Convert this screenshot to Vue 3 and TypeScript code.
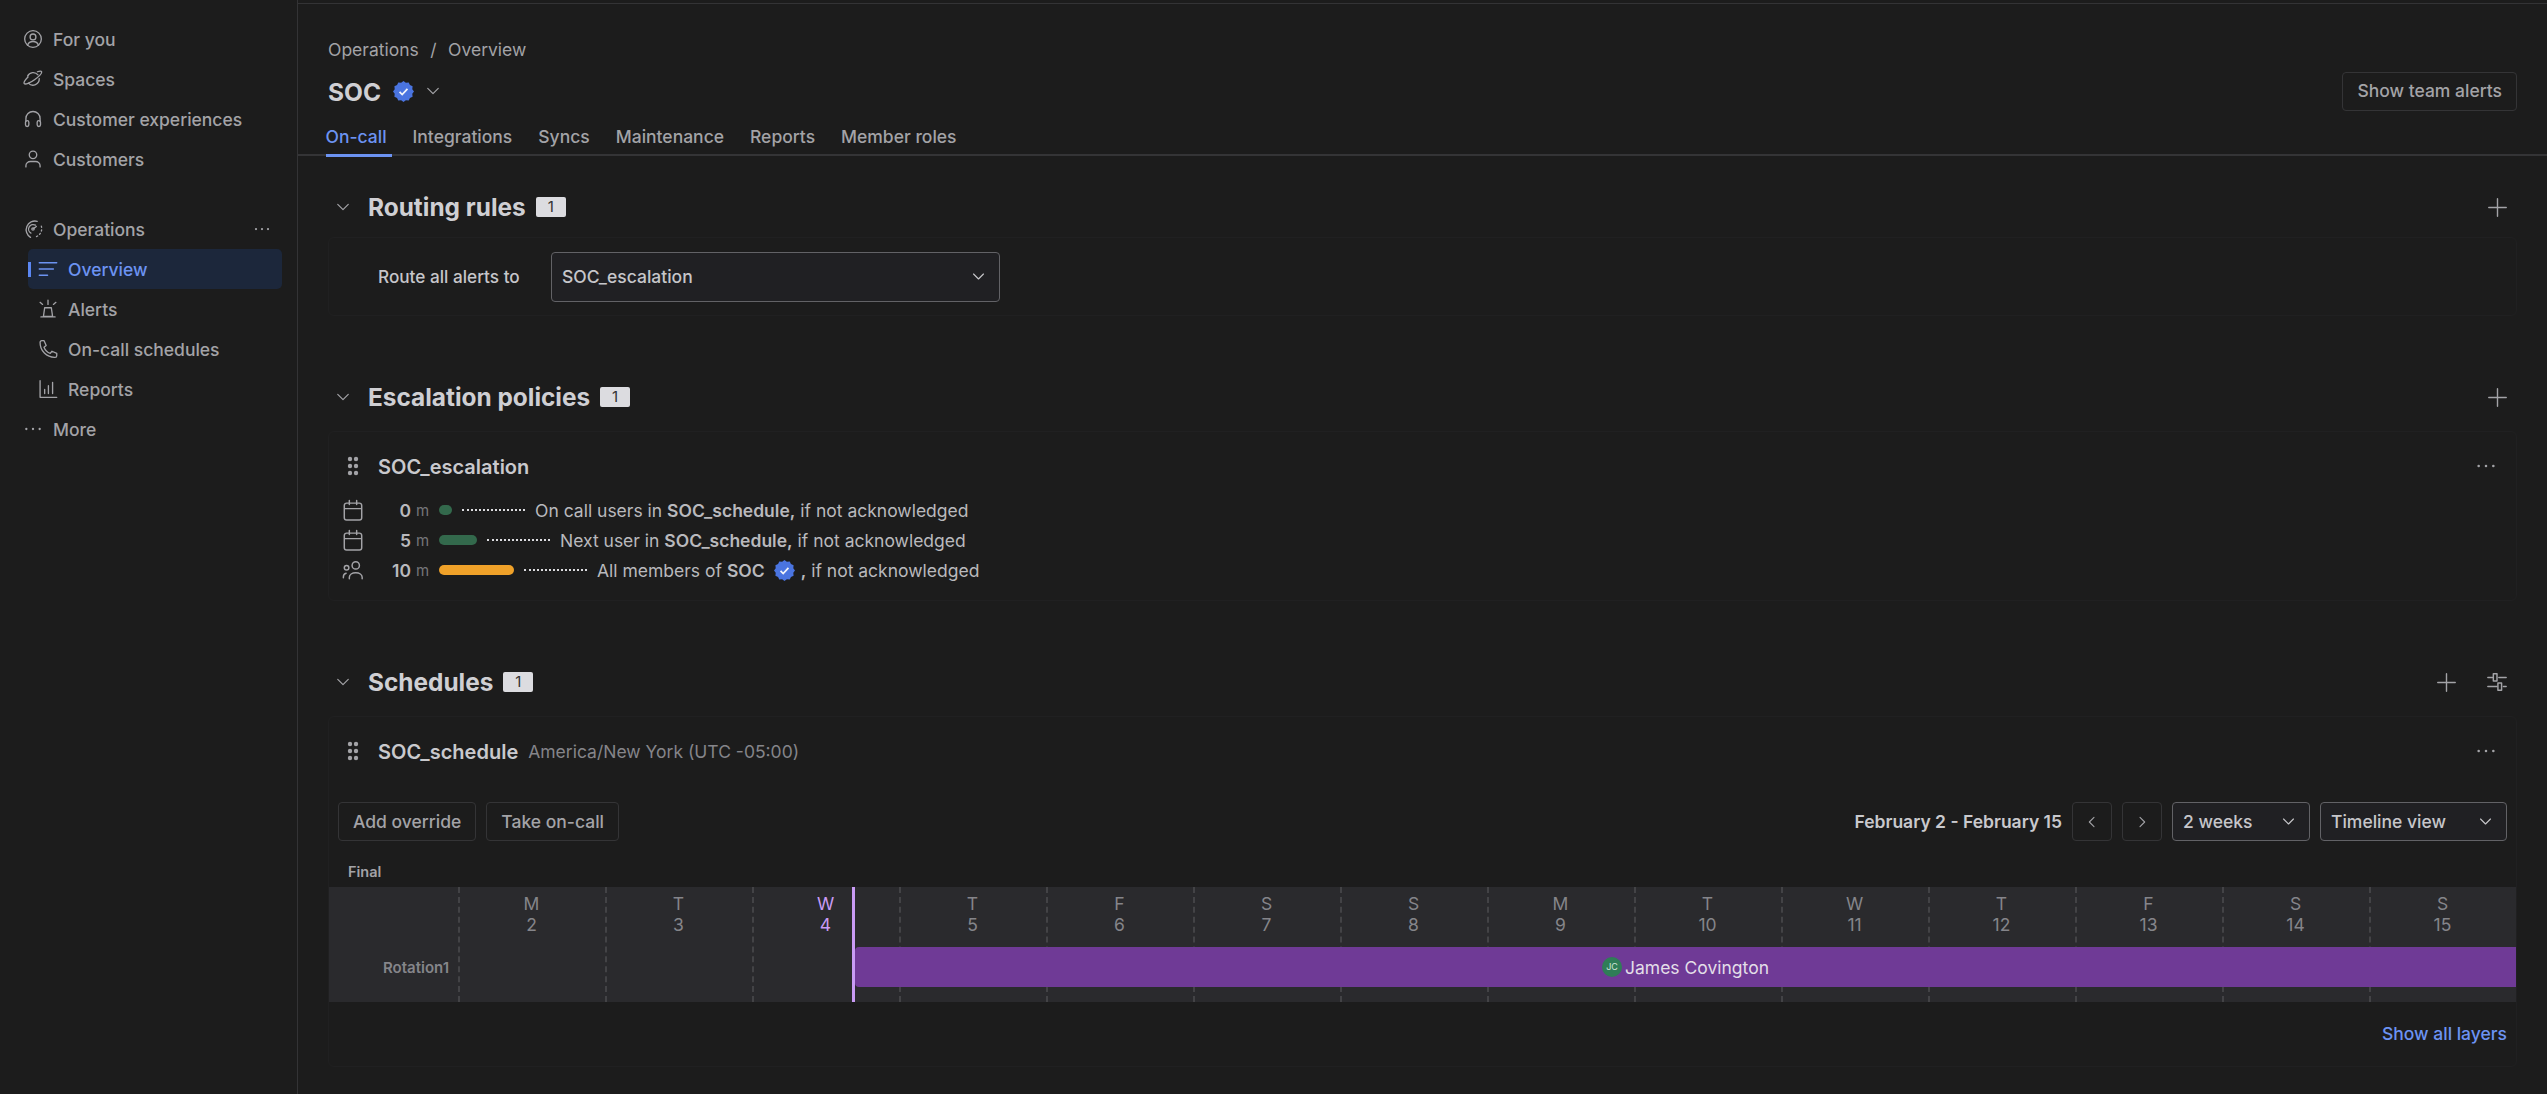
<script setup lang="ts">
interface Icon { paths: string[]; dash?: string; rings?: number[][] }

const icons: Record<string, Icon> = {
  you: { paths: ['M5.5 19.5c1-3 3.4-4.5 6.5-4.5s5.5 1.5 6.5 4.5'], rings: [[12, 12, 10], [12, 9.5, 3.5]] },
  spaces: { paths: ['M18 7A7.500 7.500 0 0 0 5.500 8.500M6.500 17a7.500 7.500 0 0 0 13-5.500', 'M6 9.5C2.500 13 .5 16 1.500 17.500c1.200 1.500 7-.7 12.300-4.600S23 5 22.300 3.200c-.4-1-2.400-1-5 .1'] },
  headset: { paths: ['M3.5 15v-3.5a8.5 8.5 0 0 1 17 0V15', 'M3 16a2 2 0 0 1 4 0v3a2 2 0 0 1-4 0zM17 16a2 2 0 0 1 4 0v3a2 2 0 0 1-4 0z'] },
  person: { paths: ['M3.5 21.5v-1.5c0-3 2.5-5 5.5-5h6c3 0 5.5 2 5.5 5v1.5'], rings: [[12, 7, 4.5]] },
  radar: { paths: ['M17 2.800A10.500 10.500 0 0 0 9 22', 'M15 7.400A5.500 5.500 0 0 0 9.500 17', 'M12.500 11.500 16 9'], dash: 'M22 8.500a10.500 10.500 0 0 1-8 13.300', rings: [[12, 12, 1.400]] },
  overview: { paths: ['M1.500 4.500h21M1.500 12h17M1.500 19.500h10'] },
  siren: { paths: ['M8 10.5h8l1.5 10.5h-11zM3.500 21.500h17', 'M12 1.500v5M2.500 4l3 2.500M21.500 4l-3 2.500'] },
  phone: { paths: ['M4.500 2h2.800l2.500 5.700-2.600 2.100a13 13 0 0 0 7.500 7.500l2.100-2.600 5.700 2.500v2.800a2 2 0 0 1-2 2A17.500 17.500 0 0 1 2.500 4a2 2 0 0 1 2-2z'] },
  chart: { paths: ['M2.500 2v20h20', 'M8 17.500v-5M12.500 17.500V8M17.500 17.500V4'] },
  dots: { paths: ['M4 12h.01M12 12h.01M20 12h.01'] },
  calendar: { paths: ['M5 4.500h14a2.500 2.500 0 0 1 2.500 2.500v13.500a2.500 2.500 0 0 1-2.500 2.500H5a2.500 2.500 0 0 1-2.500-2.500V7A2.500 2.500 0 0 1 5 4.500zM2.500 10.500h19M8 1.500v4.500M16 1.500v4.500'] },
  users: { paths: ['M8 21.500V20c0-3 3-5 7-5s7 2 7 5v1.500', 'M1.500 20.500v-1c0-2 1-3.500 3-4'], rings: [[15, 7, 4], [5, 9.500, 2.500]] },
  chevron: { paths: ['M5 8.500l7 7 7-7'] },
  left: { paths: ['M15 5l-7 7 7 7'] },
  right: { paths: ['M9 5l7 7-7 7'] },
  plus: { paths: ['M12 2v20M2 12h20'] },
  sliders: { paths: ['M2 7h5M14 7h8M2 17h10M19 17h3', 'M8 3h4v8H8zM13 13h4v8h-4z'] },
}

const topNav = [
  { label: 'For you', icon: 'you' },
  { label: 'Spaces', icon: 'spaces' },
  { label: 'Customer experiences', icon: 'headset' },
  { label: 'Customers', icon: 'person' },
]
const subNav = [
  { label: 'Overview', icon: 'overview', active: true },
  { label: 'Alerts', icon: 'siren', active: false },
  { label: 'On-call schedules', icon: 'phone', active: false },
  { label: 'Reports', icon: 'chart', active: false },
]
const tabs = ['On-call', 'Integrations', 'Syncs', 'Maintenance', 'Reports', 'Member roles']
const days: [string, number][] = [
  ['M', 2], ['T', 3], ['W', 4], ['T', 5], ['F', 6], ['S', 7], ['S', 8],
  ['M', 9], ['T', 10], ['W', 11], ['T', 12], ['F', 13], ['S', 14], ['S', 15],
]

const seal: string = Array.from({ length: 24 }, (_, i) => {
  const r = i % 2 === 0 ? 12 : 10.4
  const a = (i / 24) * Math.PI * 2
  return `${(12 + r * Math.cos(a)).toFixed(2)},${(12 + r * Math.sin(a)).toFixed(2)}`
}).join(' ')
</script>

<template>
  <div class="app">
    <svg class="defs" aria-hidden="true">
      <symbol v-for="(ic, name) in icons" :id="'i-' + name" :key="name" viewBox="0 0 24 24">
        <circle v-for="(c, n) in ic.rings || []" :key="n" :cx="c[0]" :cy="c[1]" :r="c[2]" />
        <path v-for="(d, n) in ic.paths" :key="n" :d="d" />
        <path v-if="ic.dash" :d="ic.dash" stroke-dasharray="1.500 3" />
      </symbol>
      <symbol id="i-seal" viewBox="0 0 24 24">
        <polygon :points="seal" fill="#4a74e0" stroke="none" />
        <path d="M7.500 12.500l3 3 6-6.500" stroke="#f2f4fa" stroke-width="2" fill="none" />
      </symbol>
      <symbol id="i-grip" viewBox="0 0 12 20">
        <g fill="currentColor" stroke="none">
          <circle cx="3" cy="3" r="2.200" /><circle cx="9" cy="3" r="2.200" />
          <circle cx="3" cy="10" r="2.200" /><circle cx="9" cy="10" r="2.200" />
          <circle cx="3" cy="17" r="2.200" /><circle cx="9" cy="17" r="2.200" />
        </g>
      </symbol>
    </svg>

    <aside class="sidebar">
      <a v-for="item in topNav" :key="item.label" class="nav-item">
        <svg class="ic nav-ic"><use :href="'#i-' + item.icon" /></svg>
        <span>{{ item.label }}</span>
      </a>
      <div class="nav-item ops">
        <svg class="ic nav-ic"><use href="#i-radar" /></svg>
        <span class="grow">Operations</span>
        <svg class="ic more-dots"><use href="#i-dots" /></svg>
      </div>
      <a
        v-for="item in subNav"
        :key="item.label"
        class="sub-item"
        :class="{ active: item.active }"
      >
        <svg class="ic sub-ic"><use :href="'#i-' + item.icon" /></svg>
        <span>{{ item.label }}</span>
      </a>
      <a class="nav-item">
        <svg class="ic nav-ic dots-ic"><use href="#i-dots" /></svg>
        <span>More</span>
      </a>
    </aside>

    <main class="main">
      <header class="head">
        <div class="crumbs">
          <span>Operations</span><span class="slash">/</span><span>Overview</span>
        </div>
        <div class="title-row">
          <h1>SOC</h1>
          <svg class="seal"><use href="#i-seal" /></svg>
          <svg class="ic title-chev"><use href="#i-chevron" /></svg>
          <button class="btn team">Show team alerts</button>
        </div>
        <nav class="tabs">
          <a v-for="(t, i) in tabs" :key="t" class="tab" :class="{ on: i === 0 }">{{ t }}</a>
        </nav>
      </header>

      <section class="section first">
        <div class="sec-head">
          <svg class="ic sec-chev"><use href="#i-chevron" /></svg>
          <h2>Routing rules</h2>
          <span class="count">1</span>
          <svg class="ic sec-plus"><use href="#i-plus" /></svg>
        </div>
        <div class="card route">
          <span class="route-label">Route all alerts to</span>
          <div class="select route-select">
            <span>SOC_escalation</span>
            <svg class="ic sel-chev"><use href="#i-chevron" /></svg>
          </div>
        </div>
      </section>

      <section class="section">
        <div class="sec-head">
          <svg class="ic sec-chev"><use href="#i-chevron" /></svg>
          <h2>Escalation policies</h2>
          <span class="count">1</span>
          <svg class="ic sec-plus"><use href="#i-plus" /></svg>
        </div>
        <div class="card esc">
          <div class="name-row">
            <svg class="grip"><use href="#i-grip" /></svg>
            <strong class="name">SOC_escalation</strong>
            <svg class="ic card-dots"><use href="#i-dots" /></svg>
          </div>
          <div class="steps">
            <div class="step">
              <svg class="ic step-ic"><use href="#i-calendar" /></svg>
              <b class="mins">0</b><span class="unit">m</span>
              <i class="bar green b0"></i><i class="dotted"></i>
              <span>On call users in <b>SOC_schedule,</b> if not acknowledged</span>
            </div>
            <div class="step">
              <svg class="ic step-ic"><use href="#i-calendar" /></svg>
              <b class="mins">5</b><span class="unit">m</span>
              <i class="bar green b5"></i><i class="dotted"></i>
              <span>Next user in <b>SOC_schedule,</b> if not acknowledged</span>
            </div>
            <div class="step">
              <svg class="ic step-ic"><use href="#i-users" /></svg>
              <b class="mins">10</b><span class="unit">m</span>
              <i class="bar orange b10"></i><i class="dotted"></i>
              <span>All members of <b>SOC</b></span>
              <svg class="seal inline"><use href="#i-seal" /></svg>
              <span><b>,</b> if not acknowledged</span>
            </div>
          </div>
        </div>
      </section>

      <section class="section third">
        <div class="sec-head">
          <svg class="ic sec-chev"><use href="#i-chevron" /></svg>
          <h2>Schedules</h2>
          <span class="count">1</span>
          <svg class="ic sec-plus shifted"><use href="#i-plus" /></svg>
          <svg class="ic sec-sliders"><use href="#i-sliders" /></svg>
        </div>
        <div class="card sched">
          <div class="name-row">
            <svg class="grip"><use href="#i-grip" /></svg>
            <strong class="name">SOC_schedule</strong>
            <span class="tz">America/New York (UTC -05:00)</span>
            <svg class="ic card-dots"><use href="#i-dots" /></svg>
          </div>
          <div class="toolbar">
            <button class="btn">Add override</button>
            <button class="btn">Take on-call</button>
            <strong class="range">February 2 - February 15</strong>
            <button class="btn square"><svg class="ic arrow"><use href="#i-left" /></svg></button>
            <button class="btn square"><svg class="ic arrow"><use href="#i-right" /></svg></button>
            <div class="select weeks">
              <span>2 weeks</span>
              <svg class="ic sel-chev"><use href="#i-chevron" /></svg>
            </div>
            <div class="select view">
              <span>Timeline view</span>
              <svg class="ic sel-chev"><use href="#i-chevron" /></svg>
            </div>
          </div>
          <div class="final">Final</div>
          <div class="timeline">
            <div class="rot-col"><span>Rotation1</span></div>
            <div v-for="(d, i) in days" :key="i" class="day" :class="{ today: i === 2 }">
              <span>{{ d[0] }}</span>
              <span>{{ d[1] }}</span>
            </div>
            <div class="now"></div>
            <div class="shift">
              <span class="avatar">JC</span>
              <span class="who">James Covington</span>
            </div>
          </div>
          <div class="layers"><a>Show all layers</a></div>
        </div>
      </section>
    </main>
  </div>
</template>

<style>
html, body { margin: 0; background: #1c1c1c; }
</style>

<style scoped>
.app {
  display: flex;
  width: 2547px;
  height: 1094px;
  overflow: hidden;
  background: #1c1c1c;
  color: #a3a3a7;
  font: 500 17.5px/20px Inter, "Noto Sans", sans-serif;
}
.defs { position: absolute; width: 0; height: 0; }
.ic { fill: none; stroke: currentColor; stroke-width: 1.6; stroke-linecap: round; stroke-linejoin: round; flex: none; }
.grow { flex: 1; }

.sidebar {
  box-sizing: border-box;
  flex: none;
  width: 298px;
  padding: 19px 15px 0;
  border-right: 1px solid #333335;
}
.nav-item { display: flex; align-items: center; gap: 10px; height: 40px; padding-left: 8px; }
.nav-item > span, .sub-item > span { padding-top: 2px; }
.nav-ic { width: 20px; height: 20px; }
.dots-ic { stroke-width: 2.800; }
.ops { margin-top: 30px; }
.more-dots { width: 18px; height: 18px; margin-right: 11px; stroke-width: 3; }
.sub-item {
  position: relative;
  display: flex;
  align-items: center;
  gap: 10px;
  height: 40px;
  margin-left: 13px;
  padding-left: 10px;
  border-radius: 5px;
}
.sub-ic { width: 20px; height: 20px; }
.sub-item.active { background: #1c273b; color: #6c93f2; }
.sub-item.active::before {
  content: "";
  position: absolute;
  left: 0;
  top: 13px;
  width: 3px;
  height: 15px;
  background: #5b87f2;
}

.main { flex: 1; min-width: 0; margin-top: 3px; border-top: 1px solid #333335; }
.head { padding-top: 35px; }
.crumbs { display: flex; gap: 11.500px; padding: 1px 30px 0; height: 19px; color: #a3a3a7; font-weight: 400; }
.title-row { display: flex; align-items: center; height: 40px; margin-top: 12px; padding: 0 30px; }
h1 { margin: 0; padding-top: 2px; font-size: 24.5px; line-height: 32px; font-weight: 700; color: #cfcfd3; }
.seal { width: 21px; height: 21px; margin-left: 12px; flex: none; }
.title-chev { width: 18px; height: 18px; margin-left: 10px; }
.btn {
  box-sizing: border-box;
  height: 39px;
  padding: 0 14px;
  background: transparent;
  border: 1px solid #343436;
  border-radius: 4px;
  color: #a3a3a7;
  font: inherit;
}
.team { margin-left: auto; }
.tabs {
  box-sizing: border-box;
  display: flex;
  gap: 21px;
  height: 40px;
  margin-top: 5px;
  padding-left: 27.500px;
  border-bottom: 2px solid #343436;
}
.tab { box-sizing: border-box; height: 41px; padding: 0 5px 0 0; line-height: 42px; border-bottom: 3px solid transparent; }
.tab.on { color: #6c93f2; border-bottom-color: #6c93f2; }

.section { padding: 0 30px; margin-top: 61px; }
.section.first { margin-top: 31px; }
.sec-head { display: flex; align-items: center; height: 40px; margin-bottom: 14px; }
.first .sec-head { margin-bottom: 10px; }
.sec-chev { width: 18px; height: 18px; margin-left: 6px; }
h2 { margin: 0 0 0 16px; font-size: 24.4px; line-height: 32px; font-weight: 700; color: #cfcfd3; }
.count {
  width: 30px;
  height: 20px;
  margin-left: 10px;
  border-radius: 2px;
  background: #dcdce0;
  color: #333;
  font-size: 15px;
  font-weight: 400;
  text-align: center;
}
.sec-plus { width: 21px; height: 21px; margin-left: auto; margin-right: 9px; }
.sec-plus.shifted { margin-right: 29px; }
.sec-sliders { width: 22px; height: 22px; margin-right: 9px; }

.card { box-sizing: border-box; border: 1px solid #202021; border-radius: 6px; }
.route { display: flex; align-items: center; height: 79px; padding-left: 49px; color: #c6c6ca; }
.route-label { width: 173px; font-size: 17.2px; }
.select {
  box-sizing: border-box;
  display: flex;
  align-items: center;
  justify-content: space-between;
  padding: 0 12px 0 10px;
  background: #202023;
  border: 1px solid #626266;
  border-radius: 4px;
  color: #c6c6ca;
}
.route-select { width: 449px; height: 50px; }
.sel-chev { width: 17px; height: 17px; }

.esc { height: 170px; padding-top: 14px; }
.name-row { display: flex; align-items: center; height: 40px; padding: 0 19px 0 18px; }
.grip { width: 12px; height: 20px; color: #a3a3a7; flex: none; }
.name { margin-left: 19px; padding-top: 1px; font-size: 20px; font-weight: 600; color: #c9c9cd; }
.card-dots { width: 22px; height: 22px; margin-left: auto; stroke-width: 2.800; }
.steps { margin-top: 9px; }
.step { display: flex; align-items: center; height: 30px; padding-left: 13px; color: #b9b9bd; font-weight: 400; white-space: pre-wrap; }
.step > span, .step > .mins { padding-top: 2px; }
.step b { font-weight: 600; }
.step-ic { width: 22px; height: 22px; color: #a3a3a7; }
.mins { width: 47px; text-align: right; }
.unit { width: 23px; margin-left: 5px; color: #76767a; font-size: 15px; }
.bar { display: block; height: 10px; border-radius: 5px; }
.green { background: #33694c; }
.orange { background: #efa129; }
.b0 { width: 13px; }
.b5 { width: 38px; }
.b10 { width: 75px; }
.dotted { display: block; width: 63px; margin: 0 10px; border-top: 2px dotted #dcdce0; }
.seal.inline { margin: 0 6px 0 9px; }

.sched { height: 351px; padding-top: 14px; }
.tz { margin-left: 10px; padding-top: 1px; color: #85858a; font-weight: 400; }
.toolbar { display: flex; align-items: center; gap: 10px; margin-top: 31px; padding: 0 9px; }
.range { margin-left: auto; color: #c9c9cd; font-weight: 600; }
.square { width: 40px; padding: 0; display: flex; align-items: center; justify-content: center; }
.arrow { width: 16px; height: 16px; }
.weeks { width: 138px; height: 39px; }
.view { width: 187px; height: 39px; }
.final { margin: 21px 0 5px; padding-left: 19px; font-size: 14.500px; font-weight: 600; }
.timeline { position: relative; display: flex; height: 115px; background: #2a2a2d; }
.rot-col {
  box-sizing: border-box;
  flex: none;
  width: 129px;
  padding: 71px 9px 0 0;
  text-align: right;
  color: #85858a;
  font-size: 15px;
  font-weight: 600;
}
.day {
  box-sizing: border-box;
  display: flex;
  flex-direction: column;
  align-items: center;
  width: 147px;
  padding: 6px 2px 0 0;
  border-left: 2px dashed #434346;
  color: #85858a;
  font-weight: 400;
  line-height: 21px;
}
.day.today { color: #c99bf5; }
.now { position: absolute; left: 523px; top: 0; bottom: 0; width: 3px; background: #c99bf5; }
.shift {
  position: absolute;
  left: 526px;
  right: 0;
  top: 60px;
  height: 40px;
  display: flex;
  align-items: center;
  justify-content: center;
  gap: 3px;
  background: #6f3a96;
  border-radius: 4px 0 0 4px;
  color: #e3dfe8;
  font-weight: 400;
}
.who { padding-top: 1px; }
.avatar {
  width: 20px;
  height: 20px;
  border-radius: 50%;
  background: #2f7d57;
  color: #cfe3d8;
  font-size: 9px;
  line-height: 20px;
  text-align: center;
}
.layers { margin-top: 20px; padding-right: 9px; text-align: right; color: #6c93f2; line-height: 24px; }
</style>
